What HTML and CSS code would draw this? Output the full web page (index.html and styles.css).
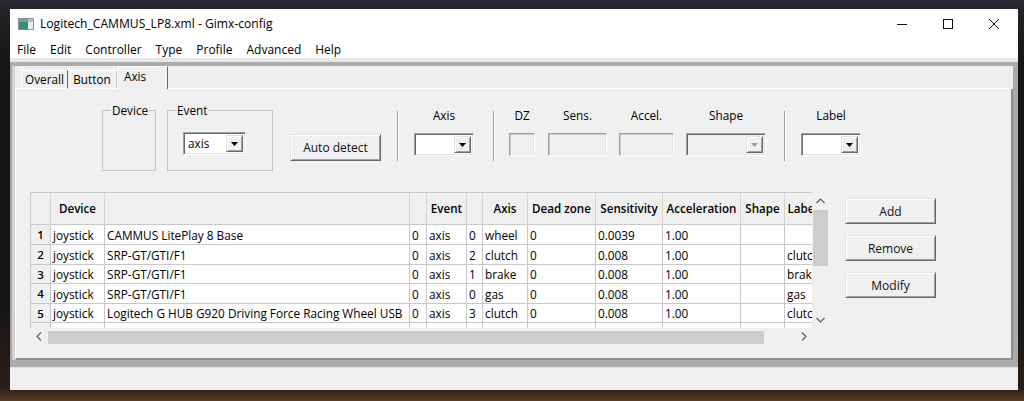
FILE: index.html
```html
<!DOCTYPE html>
<html>
<head>
<meta charset="utf-8">
<title>Gimx-config</title>
<link rel="stylesheet" href="styles.css">
</head>
<body>
<div class="window">
  <div class="titlebar">
    <svg class="appicon" width="16" height="12" viewBox="0 0 16 12">
      <rect x="0.5" y="0.5" width="15" height="11" fill="#e8ecec" stroke="#8a9494"/>
      <rect x="1" y="1" width="9" height="10" fill="#3e8a78"/>
      <rect x="1" y="1" width="9" height="3" fill="#5fae98"/>
      <rect x="10" y="1" width="5" height="3" fill="#b9c2c2"/>
    </svg>
    <span class="title">Logitech_CAMMUS_LP8.xml - Gimx-config</span>
    <div class="winctrls">
      <div class="wc"><svg width="10" height="10" viewBox="0 0 10 10"><line x1="0" y1="5.5" x2="10" y2="5.5" stroke="#111" stroke-width="1"/></svg></div>
      <div class="wc"><svg width="10" height="10" viewBox="0 0 10 10"><rect x="0.5" y="0.5" width="9" height="9" fill="none" stroke="#111" stroke-width="1"/></svg></div>
      <div class="wc"><svg width="10" height="10" viewBox="0 0 10 10"><path d="M0 0 L10 10 M10 0 L0 10" stroke="#111" stroke-width="1"/></svg></div>
    </div>
  </div>
  <div class="menubar">
    <span class="mi">File</span><span class="mi">Edit</span><span class="mi">Controller</span><span class="mi">Type</span><span class="mi">Profile</span><span class="mi">Advanced</span><span class="mi">Help</span>
  </div>
  <div class="menusep"></div>
  <div class="client">
    <div class="notebook">
      <div class="tabs">
        <div class="tabpad"></div>
        <div class="tab t-overall">Overall</div>
        <div class="tab t-button">Button</div>
        <div class="tab active">Axis</div>
        <div class="tabfill"></div>
      </div>
      <div class="page">
        <div class="controls">
          <fieldset class="group g-device"><legend>Device</legend></fieldset>
          <fieldset class="group g-event"><legend>Event</legend>
            <div class="combo c-event"><span class="cval">axis</span><span class="dd"><svg width="7" height="4" viewBox="0 0 7 4"><path d="M0 0 H7 L3.5 4 Z" fill="#000"/></svg></span></div>
          </fieldset>
          <button class="btn b-auto">Auto detect</button>
          <div class="vsep s1"></div>
          <div class="fcol f-axis"><div class="flabel">Axis</div>
            <div class="combo"><span class="cval"></span><span class="dd"><svg width="7" height="4" viewBox="0 0 7 4"><path d="M0 0 H7 L3.5 4 Z" fill="#000"/></svg></span></div>
          </div>
          <div class="vsep s2"></div>
          <div class="fcol f-dz"><div class="flabel">DZ</div><div class="tfield"></div></div>
          <div class="fcol f-sens"><div class="flabel">Sens.</div><div class="tfield"></div></div>
          <div class="fcol f-accel"><div class="flabel">Accel.</div><div class="tfield"></div></div>
          <div class="fcol f-shape"><div class="flabel">Shape</div>
            <div class="combo disabled"><span class="cval"></span><span class="dd"><svg width="7" height="4" viewBox="0 0 7 4"><path d="M0 0 H7 L3.5 4 Z" fill="#a0a0a0"/></svg></span></div>
          </div>
          <div class="vsep s3"></div>
          <div class="fcol f-label"><div class="flabel">Label</div>
            <div class="combo"><span class="cval"></span><span class="dd"><svg width="7" height="4" viewBox="0 0 7 4"><path d="M0 0 H7 L3.5 4 Z" fill="#000"/></svg></span></div>
          </div>
        </div>
        <div class="gridrow">
          <div class="gridbox">
            <div class="gridtop">
              <div class="cells">
                <div class="grid">
                  <div class="h rl"></div><div class="h">Device</div><div class="h"></div><div class="h"></div><div class="h">Event</div><div class="h"></div><div class="h">Axis</div><div class="h">Dead zone</div><div class="h">Sensitivity</div><div class="h">Acceleration</div><div class="h">Shape</div><div class="h">Label</div>

                  <div class="rl">1</div><div class="c">joystick</div><div class="c">CAMMUS LitePlay 8 Base</div><div class="c">0</div><div class="c">axis</div><div class="c">0</div><div class="c">wheel</div><div class="c">0</div><div class="c">0.0039</div><div class="c">1.00</div><div class="c"></div><div class="c"></div>

                  <div class="rl">2</div><div class="c">joystick</div><div class="c">SRP-GT/GTI/F1</div><div class="c">0</div><div class="c">axis</div><div class="c">2</div><div class="c">clutch</div><div class="c">0</div><div class="c">0.008</div><div class="c">1.00</div><div class="c"></div><div class="c">clutch</div>

                  <div class="rl">3</div><div class="c">joystick</div><div class="c">SRP-GT/GTI/F1</div><div class="c">0</div><div class="c">axis</div><div class="c">1</div><div class="c">brake</div><div class="c">0</div><div class="c">0.008</div><div class="c">1.00</div><div class="c"></div><div class="c">brake</div>

                  <div class="rl">4</div><div class="c">joystick</div><div class="c">SRP-GT/GTI/F1</div><div class="c">0</div><div class="c">axis</div><div class="c">0</div><div class="c">gas</div><div class="c">0</div><div class="c">0.008</div><div class="c">1.00</div><div class="c"></div><div class="c">gas</div>

                  <div class="rl">5</div><div class="c">joystick</div><div class="c">Logitech G HUB G920 Driving Force Racing Wheel USB</div><div class="c">0</div><div class="c">axis</div><div class="c">3</div><div class="c">clutch</div><div class="c">0</div><div class="c">0.008</div><div class="c">1.00</div><div class="c"></div><div class="c">clutch</div>

                  <div class="rl">6</div><div class="c">joystick</div><div class="c">Logitech G HUB G920 Driving Force Racing Wheel USB</div><div class="c">0</div><div class="c">axis</div><div class="c">1</div><div class="c">brake</div><div class="c">0</div><div class="c">0.008</div><div class="c">1.00</div><div class="c"></div><div class="c">brake</div>
                </div>
              </div>
              <div class="vscroll">
                <div class="arrow"><svg width="9" height="6" viewBox="0 0 9 6"><path d="M0.5 5 L4.5 1 L8.5 5" fill="none" stroke="#606060" stroke-width="1.2"/></svg></div>
                <div class="vthumb"></div>
                <div class="vtrack"></div>
                <div class="arrow"><svg width="9" height="6" viewBox="0 0 9 6"><path d="M0.5 1 L4.5 5 L8.5 1" fill="none" stroke="#606060" stroke-width="1.2"/></svg></div>
              </div>
            </div>
            <div class="gridbottom">
              <div class="hscroll">
                <div class="arrow"><svg width="6" height="9" viewBox="0 0 6 9"><path d="M5 0.5 L1 4.5 L5 8.5" fill="none" stroke="#606060" stroke-width="1.2"/></svg></div>
                <div class="hthumb"></div>
                <div class="htrack"></div>
                <div class="arrow"><svg width="6" height="9" viewBox="0 0 6 9"><path d="M1 0.5 L5 4.5 L1 8.5" fill="none" stroke="#606060" stroke-width="1.2"/></svg></div>
              </div>
              <div class="corner"></div>
            </div>
          </div>
          <div class="sidebtns">
            <button class="btn sb">Add</button>
            <button class="btn sb">Remove</button>
            <button class="btn sb">Modify</button>
          </div>
        </div>
      </div>
    </div>
    <div class="statusbar"></div>
  </div>
</div>
</body>
</html>
```

FILE: styles.css
```css
* { box-sizing: border-box; }
html, body { margin: 0; padding: 0; }
body {
  width: 1024px;
  height: 401px;
  overflow: hidden;
  background: linear-gradient(#2d2c34 0, #25242a 9px, #161616 60px, #141414 300px, #2a1e16 388px, #5a3c24 401px);
  font-family: "Open Sans", "Noto Sans", sans-serif;
  font-size: 11.5px;
  color: #000;
}
.window {
  margin: 9px 0 0 10px;
  width: 1008px;
  height: 381px;
  display: flex;
  flex-direction: column;
  background: #ababab;
}
.titlebar {
  height: 29px;
  flex: none;
  background: #fff;
  display: flex;
  align-items: center;
}
.appicon { margin-left: 8px; flex: none; }
.title { margin-left: 6px; font-size: 12.1px; color: #000; }
.winctrls { margin-left: auto; display: flex; height: 29px; margin-right: 1px; }
.wc { width: 46px; height: 29px; display: flex; align-items: center; justify-content: center; }

.menubar {
  height: 20px;
  flex: none;
  background: #fff;
  display: flex;
  align-items: center;
  padding-top: 3px;
  font-size: 12px;
}
.mi { padding: 0 7px; }
.menusep { height: 4px; flex: none; background: #e8e8e8; }

.client {
  flex: 1;
  display: flex;
  flex-direction: column;
  padding: 4px 5px 0 1px;
  border-left: 1px solid #a0a0a0;
}
.notebook {
  height: 294px;
  flex: none;
  display: flex;
  flex-direction: column;
  background: #f0f0f0;
  border-left: 3px solid #d2d2d2;
}
.tabs {
  height: 23px;
  flex: none;
  display: flex;
  align-items: flex-end;
  background: #efefef;
}
.tabpad { width: 6px; height: 1px; background: #fff; }
.tabfill { flex: 1; height: 1px; background: #fff; }
.tab {
  height: 19px;
  display: flex;
  align-items: center;
  justify-content: center;
  border-left: 1px solid #fff;
  border-top: 1px solid #fff;
  border-bottom: 1px solid #fff;
  background: #f0f0f0;
  padding-bottom: 1px;
  font-size: 11.75px;
}
.t-overall { width: 47px; border-right: 1px solid #696969; }
.t-button { width: 49px; border-right: 1px solid #c8c8c8; border-left: none; }
.tab.active {
  width: 51px;
  height: 23px;
  border-bottom: none;
  border-right: 1px solid #696969;
  padding: 0 0 5px 6px;
  justify-content: flex-start;
}

.page {
  flex: 1;
  background: #f0f0f0;
  border-left: 1px solid #fff;
  border-right: 2px solid #8c8c8c;
  border-bottom: 2px solid #8c8c8c;
  display: flex;
  flex-direction: column;
}

/* controls */
.controls {
  height: 103px;
  flex: none;
  display: flex;
  align-items: flex-start;
  padding: 14px 0 0 86px;
}
.group {
  margin: 0;
  padding: 0;
  border: 1px solid #c6c6c6;
  height: 68px;
  min-width: 0;
}
.group legend {
  margin-left: 8px;
  padding: 0 1px;
  line-height: 14px;
  font-size: 11.75px;
}
.g-device { width: 54px; }
.g-event { width: 106px; margin-left: 11px; }
.c-event { margin: 15px 0 0 15px; width: 63px; }

.combo {
  height: 23px;
  background: #fff;
  border: 1px solid;
  border-color: #a0a0a0 #fff #fff #a0a0a0;
  box-shadow: inset 1px 1px 0 #696969, inset -1px -1px 0 #e3e3e3;
  display: flex;
  padding: 2px;
}
.combo.disabled { background: #f0f0f0; }
.cval { flex: 1; padding-left: 2px; line-height: 17px; font-size: 11.75px; }
.dd {
  width: 17px;
  height: 17px;
  flex: none;
  background: #f0f0f0;
  border: 1px solid;
  border-color: #e3e3e3 #696969 #696969 #e3e3e3;
  box-shadow: inset 1px 1px 0 #fff, inset -1px -1px 0 #a0a0a0;
  display: flex;
  align-items: center;
  justify-content: center;
}
.tfield {
  height: 23px;
  background: #f0f0f0;
  border: 1px solid;
  border-color: #a0a0a0 #fff #fff #a0a0a0;
  box-shadow: inset 1px 1px 0 #c8c8c8, inset -1px -1px 0 #e3e3e3;
}

.btn {
  font-family: inherit;
  font-size: 12px;
  color: #111;
  background: #f0f0f0;
  border: 1px solid;
  border-color: #e3e3e3 #696969 #696969 #e3e3e3;
  box-shadow: inset 1px 1px 0 #fff, inset -1px -1px 0 #a0a0a0;
  padding: 0;
  margin: 0;
}
.b-auto { width: 91px; height: 27px; margin: 31px 0 0 17px; flex: none; }

.vsep {
  width: 2px;
  height: 50px;
  margin-top: 8px;
  border-left: 1px solid #a0a0a0;
  border-right: 1px solid #fff;
  flex: none;
}
.s1 { margin-left: 16px; }
.s2 { margin-left: 19px; }
.s3 { margin-left: 18px; }

.fcol { display: flex; flex-direction: column; margin-top: 5px; flex: none; }
.flabel { line-height: 14px; height: 14px; text-align: center; margin-bottom: 11px; font-size: 11.75px; }
.f-axis { width: 60px; margin-left: 15px; }
.f-dz { width: 26px; margin-left: 14px; }
.f-sens { width: 59px; margin-left: 13px; }
.f-accel { width: 55px; margin-left: 12px; }
.f-shape { width: 80px; margin-left: 12px; }
.f-label { width: 60px; margin-left: 15px; }

/* grid */
.gridrow { display: flex; align-items: flex-start; padding-left: 14px; }
.gridbox { width: 799px; display: flex; flex-direction: column; flex: none; }
.gridtop { display: flex; height: 136px; }
.cells {
  width: 782px;
  height: 136px;
  overflow: hidden;
  border-left: 1px solid #c8c8c8;
  border-top: 1px solid #c8c8c8;
  background: #fff;
}
.grid {
  display: grid;
  width: max-content;
  grid-template-columns: 20px 54px 305px 17px 40px 16px 45px 68px 67px 78px 44px 36px;
  grid-template-rows: 32px 20px 20px 19px 20px 19px 20px;
}
.grid > div {
  border-right: 1px solid #c8c8c8;
  border-bottom: 1px solid #c8c8c8;
  white-space: nowrap;
  overflow: hidden;
  display: flex;
  align-items: center;
}
.grid .h {
  background: #f0f0f0;
  justify-content: center;
  font-weight: 600;
  font-size: 11.6px;
  border-right-color: #d4d4d4;
}
.grid .rl {
  background: #f0f0f0;
  justify-content: center;
  font-weight: 600;
}
.grid .c { padding-left: 2px; background: #fff; font-size: 11.8px; }

.vscroll {
  width: 17px;
  height: 136px;
  background: #f0f0f0;
  display: flex;
  flex-direction: column;
}
.arrow { width: 17px; height: 17px; display: flex; align-items: center; justify-content: center; flex: none; }
.vthumb { height: 56px; margin: 1px 1px 0 1px; background: #cdcdcd; flex: none; }
.vtrack { flex: 1; }
.gridbottom { display: flex; height: 17px; }
.hscroll { width: 782px; display: flex; background: #f0f0f0; }
.hthumb { width: 716px; margin: 3px 0 0 1px; height: 13px; background: #cdcdcd; flex: none; }
.htrack { flex: 1; }
.corner { width: 17px; background: #f0f0f0; }

.sidebtns {
  display: flex;
  flex-direction: column;
  gap: 11px;
  margin: 6px 0 0 16px;
}
.sb { width: 91px; height: 26px; }

.statusbar {
  margin-top: 7px;
  margin-left: -2px;
  margin-right: -5px;
  flex: 1;
  background: #f0f0f0;
  border-top: 1px solid #e0e0e0;
}
```
